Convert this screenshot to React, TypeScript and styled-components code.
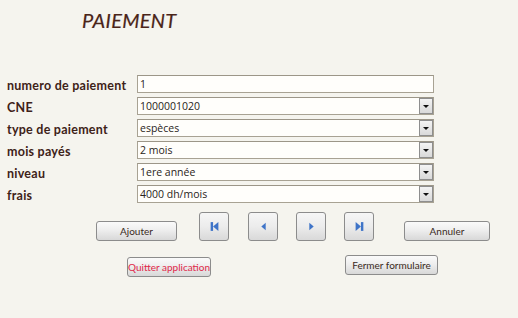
import React from "react";
import styled, { createGlobalStyle } from "styled-components";

const Global = createGlobalStyle`
  html, body { margin: 0; padding: 0; background: #f5f4ee; }
  body { width: 518px; height: 318px; overflow: hidden; }
`;

const Page = styled.div`
  width: 518px;
  height: 318px;
  box-sizing: border-box;
  background: #f5f4ee;
  padding-top: 8px;
  font-family: "Lato", "Open Sans", sans-serif;
`;

const Title = styled.h1`
  margin: 0 0 0 82px;
  font-family: "Lato", sans-serif;
  font-style: italic;
  font-weight: 400;
  font-size: 20px;
  line-height: 24px;
  letter-spacing: 0.3px;
  color: #4a2418;
  -webkit-text-stroke: 0.2px #4a2418;
`;

const Form = styled.div`
  display: grid;
  grid-template-columns: 130px 297px;
  grid-auto-rows: 18px;
  row-gap: 4px;
  column-gap: 0;
  margin: 43px 0 0 7px;
  align-items: center;
`;

const Label = styled.div`
  font-family: "Lato", sans-serif;
  font-weight: 700;
  font-size: 12.5px;
  letter-spacing: 0.25px;
  color: #3e2218;
  padding-top: 2px;
  white-space: nowrap;
`;

const Field = styled.div`
  position: relative;
  height: 18px;
  box-sizing: border-box;
  border: 1px solid #a8a293;
  border-top-color: #9c9688;
  background: #fffefb;
  display: flex;
  align-items: center;
  padding-left: 2px;
  font-family: "Open Sans", sans-serif;
  font-size: 10.5px;
  color: #2a2420;
`;

const Value = styled.span`
  flex: 1;
  white-space: nowrap;
`;

const DropButton = styled.div`
  width: 14px;
  height: 16px;
  box-sizing: border-box;
  border: 1px solid #8e8e8e;
  background: linear-gradient(#f4f4f4, #d9d9d9);
  display: flex;
  align-items: center;
  justify-content: center;
`;

const Arrow = styled.span`
  width: 0;
  height: 0;
  border-left: 3px solid transparent;
  border-right: 3px solid transparent;
  border-top: 3px solid #111;
`;

const ButtonRow = styled.div`
  display: flex;
  align-items: flex-start;
  margin: 9px 0 0 96px;
`;

const Btn = styled.button<{ $w: number; $ml?: number; $mt?: number; $red?: boolean }>`
  width: ${(p) => p.$w}px;
  height: 20px;
  margin-left: ${(p) => p.$ml ?? 0}px;
  margin-top: ${(p) => p.$mt ?? 0}px;
  padding: 0;
  box-sizing: border-box;
  border: 1px solid #8c8c8c;
  border-radius: 3px;
  background: linear-gradient(#fafafa 0%, #eeeeee 45%, #d8d8d8 100%);
  font-family: "Lato", sans-serif;
  font-size: 10px;
  color: ${(p) => (p.$red ? "#e0284a" : "#3a2a22")};
  cursor: pointer;
`;

const NavBtn = styled.button<{ $ml: number }>`
  width: 30px;
  height: 29px;
  margin-left: ${(p) => p.$ml}px;
  padding: 0;
  box-sizing: border-box;
  border: 1px solid #8c8c8c;
  border-radius: 3px;
  background: linear-gradient(#f6f6f6 0%, #ececec 50%, #d9d9d9 100%);
  display: flex;
  align-items: center;
  justify-content: center;
`;

const BottomRow = styled.div`
  display: flex;
  align-items: flex-start;
  margin: 14px 0 0 127px;
`;

const Icon = ({ kind }: { kind: "first" | "prev" | "next" | "last" }) => {
  const c = "#3f74c8";
  return (
    <svg width="11" height="11" viewBox="0 0 10 10">
      {kind === "first" && (
        <>
          <rect x="1.5" y="1" width="2.2" height="8" fill={c} />
          <polygon points="8.5,1 8.5,9 3.7,5" fill={c} />
        </>
      )}
      {kind === "prev" && <polygon points="7,1.5 7,8.5 3,5" fill={c} />}
      {kind === "next" && <polygon points="3,1.5 3,8.5 7,5" fill={c} />}
      {kind === "last" && (
        <>
          <polygon points="1.5,1 1.5,9 6.3,5" fill={c} />
          <rect x="6.3" y="1" width="2.2" height="8" fill={c} />
        </>
      )}
    </svg>
  );
};

const rows: { label: string; value: string; combo: boolean }[] = [
  { label: "numero de paiement", value: "1", combo: false },
  { label: "CNE", value: "1000001020", combo: true },
  { label: "type de paiement", value: "espèces", combo: true },
  { label: "mois payés", value: "2 mois", combo: true },
  { label: "niveau", value: "1ere année", combo: true },
  { label: "frais", value: "4000 dh/mois", combo: true },
];

export default function App() {
  return (
    <Page>
      <Global />
      <Title>PAIEMENT</Title>
      <Form>
        {rows.map((r) => (
          <React.Fragment key={r.label}>
            <Label>{r.label}</Label>
            <Field>
              <Value>{r.value}</Value>
              {r.combo && (
                <DropButton>
                  <Arrow />
                </DropButton>
              )}
            </Field>
          </React.Fragment>
        ))}
      </Form>
      <ButtonRow>
        <Btn $w={81} $mt={9}>Ajouter</Btn>
        <NavBtn $ml={22}><Icon kind="first" /></NavBtn>
        <NavBtn $ml={19}><Icon kind="prev" /></NavBtn>
        <NavBtn $ml={18}><Icon kind="next" /></NavBtn>
        <NavBtn $ml={18}><Icon kind="last" /></NavBtn>
        <Btn $w={86} $ml={30} $mt={9}>Annuler</Btn>
      </ButtonRow>
      <BottomRow>
        <Btn $w={84} $red $mt={2}>Quitter application</Btn>
        <Btn $w={93} $ml={134}>Fermer formulaire</Btn>
      </BottomRow>
    </Page>
  );
}
